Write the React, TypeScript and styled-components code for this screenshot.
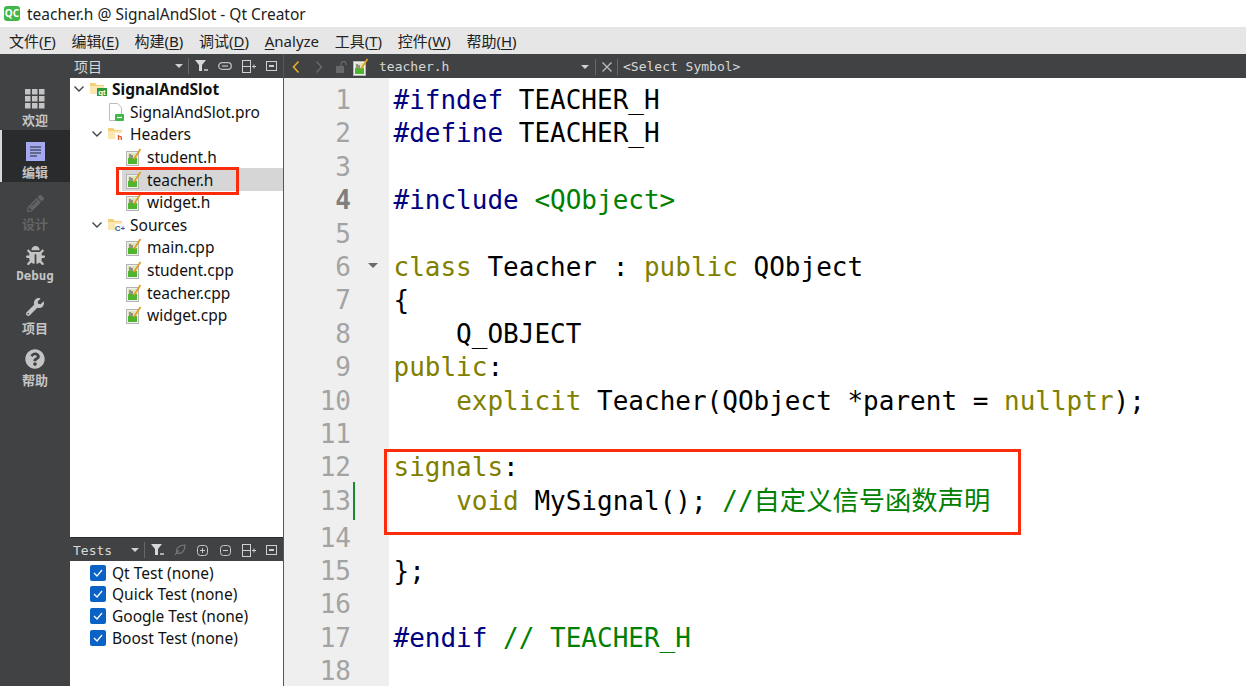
import React from 'react';
import styled, { createGlobalStyle } from 'styled-components';
import { FaBug, FaWrench, FaQuestionCircle, FaPencilAlt } from 'react-icons/fa';

const Global = createGlobalStyle`
  html, body { margin: 0; padding: 0; background: #fff; overflow: hidden; }
  * { box-sizing: border-box; }
`;

const UI = `"Noto Sans", "Noto Sans CJK SC", sans-serif`;
const MONO = `"DejaVu Sans Mono", "Noto Sans CJK SC", monospace`;

const Page = styled.div`
  position: relative;
  width: 1246px;
  height: 686px;
  overflow: hidden;
  display: flex;
  flex-direction: column;
  font-family: ${UI};
`;

const TitleBar = styled.div`
  height: 27px;
  display: flex;
  align-items: center;
  gap: 7px;
  padding: 0 0 0 4px;
  font-size: 15.5px;
  color: #222;
`;

const QtBadge = styled.div`
  width: 16px;
  height: 15px;
  border-radius: 3px;
  background: #41b649;
  color: #fff;
  font-size: 10px;
  font-weight: 700;
  line-height: 15px;
  text-align: center;
`;

const MenuBar = styled.div`
  height: 27px;
  display: flex;
  align-items: center;
  gap: 15.7px;
  padding-left: 9px;
  background: #e6e6e6;
  font-size: 15px;
  color: #222;
`;

const Underline = styled.span`
  text-decoration: underline;
  text-underline-offset: 2px;
`;

const Body = styled.div`
  flex: 1;
  display: flex;
  min-height: 0;
`;

const Sidebar = styled.div`
  width: 70px;
  flex: none;
  background: #404244;
  padding-top: 24px;
  display: flex;
  flex-direction: column;
`;

const ModeButton = styled.div<{ $active?: boolean; $disabled?: boolean }>`
  height: 52px;
  padding-top: 10px;
  display: flex;
  flex-direction: column;
  align-items: center;
  gap: 2px;
  background: ${({ $active }) => ($active ? '#2a2b2d' : 'transparent')};
  border-left: ${({ $active }) => ($active ? '2px solid #d8d8d8' : 'none')};
  padding-right: ${({ $active }) => ($active ? '2px' : '0')};
  color: ${({ $disabled }) => ($disabled ? '#626466' : '#c4c4c4')};
`;

const ModeLabel = styled.div<{ $mono?: boolean }>`
  font-family: ${({ $mono }) => ($mono ? MONO : UI)};
  font-size: ${({ $mono }) => ($mono ? '12.5px' : '13px')};
  font-weight: 700;
  line-height: 16px;
`;

const IconSlot = styled.div`
  height: 22px;
  display: flex;
  align-items: center;
  justify-content: center;
`;

const LeftColumn = styled.div`
  width: 214px;
  flex: none;
  display: flex;
  flex-direction: column;
  border-right: 1px solid #55575a;
`;

const PaneHeader = styled.div<{ $top?: boolean }>`
  height: 24px;
  flex: none;
  background: #404244;
  display: flex;
  align-items: center;
  padding: ${({ $top }) => ($top ? '1px 0 0 3px' : '0 0 0 4px')};
  color: #d8d8d8;
  border-top: ${({ $top }) => ($top ? '1px solid #2c2c2c' : 'none')};
`;

const PaneTitle = styled.div<{ $mono?: boolean }>`
  flex: 1;
  font-family: ${({ $mono }) => ($mono ? MONO : UI)};
  font-size: ${({ $mono }) => ($mono ? '13px' : '14px')};
`;

const ToolGroup = styled.div`
  display: flex;
  align-items: center;
  gap: 10px;
  padding-right: 6px;
`;

const Sep = styled.div`
  width: 1px;
  height: 16px;
  margin: 0 -4px 0 -5px;
  background: #66686a;
`;

const Arrow = styled.div`
  width: 0;
  height: 0;
  border-left: 4px solid transparent;
  border-right: 4px solid transparent;
  border-top: 4px solid #d0d0d0;
`;

const Tree = styled.div`
  height: 459px;
  flex: none;
  background: #fff;
`;

const TreeRow = styled.div<{ $level: number; $selected?: boolean }>`
  height: 22.6px;
  display: flex;
  align-items: center;
  gap: 5px;
  padding-left: ${({ $level }) => 3 + $level * 18}px;
  background: ${({ $selected }) =>
    $selected ? 'linear-gradient(to right, transparent 52px, #d6d6d6 52px)' : 'transparent'};
  font-size: 15.5px;
  color: #111;
`;

const Chevron = styled.svg`
  width: 12px;
  flex: none;
`;

const Spacer = styled.div`
  width: 12px;
  flex: none;
`;

const TreeName = styled.span<{ $bold?: boolean }>`
  font-weight: ${({ $bold }) => ($bold ? 700 : 400)};
`;

const TestList = styled.div`
  flex: 1;
  background: #fff;
  padding: 1px 0 0 20px;
`;

const TestRow = styled.label`
  height: 21.6px;
  display: flex;
  align-items: center;
  gap: 6px;
  font-size: 15.5px;
  color: #111;
`;

const CheckBox = styled.div`
  width: 16px;
  height: 16px;
  border-radius: 2px;
  background: #0a62c4;
  display: flex;
  align-items: center;
  justify-content: center;
`;

const EditorColumn = styled.div`
  flex: 1;
  min-width: 0;
  display: flex;
  flex-direction: column;
`;

const EditorBar = styled.div`
  height: 24px;
  flex: none;
  padding-top: 1px;
  background: #404244;
  display: flex;
  align-items: center;
  color: #d8d8d8;
  font-family: ${MONO};
  font-size: 13px;
`;

const NavSlot = styled.div`
  width: 23px;
  display: flex;
  justify-content: center;
`;

const FileName = styled.div`
  width: 212px;
  padding-left: 10px;
`;

const EditorSep = styled.div`
  width: 1px;
  height: 16px;
  background: #66686a;
`;

const ArrowSlot = styled.div`
  width: 14px;
  display: flex;
`;

const CloseSlot = styled.div`
  width: 21px;
  display: flex;
  justify-content: center;
`;

const SymbolLabel = styled.div`
  padding-left: 5px;
`;

const Code = styled.div`
  flex: 1;
  padding-top: 6px;
  background: linear-gradient(to right, #efefef 105px, #fff 105px);
  font-family: ${MONO};
  font-size: 26px;
`;

const Line = styled.div<{ $tall?: boolean }>`
  height: ${({ $tall }) => ($tall ? '37px' : '33.4px')};
  display: flex;
  align-items: flex-end;
`;

const LineNo = styled.div<{ $current?: boolean }>`
  width: 67px;
  height: 33.4px;
  line-height: 33.4px;
  text-align: right;
  flex: none;
  color: ${({ $current }) => ($current ? '#7f7f7f' : '#a3a3a3')};
  font-weight: ${({ $current }) => ($current ? 700 : 400)};
`;

const ChangeMark = styled.div<{ $on?: boolean }>`
  width: 2px;
  height: 38px;
  margin-left: 2px;
  align-self: center;
  flex: none;
  background: ${({ $on }) => ($on ? '#1c8a2c' : 'transparent')};
`;

const FoldCol = styled.div`
  width: 34px;
  height: 33.4px;
  flex: none;
  display: flex;
  align-items: center;
  padding-left: 13px;
`;

const FoldArrow = styled.div`
  width: 0;
  height: 0;
  margin-top: -5px;
  border-left: 5px solid transparent;
  border-right: 5px solid transparent;
  border-top: 5px solid #6a6a6a;
`;

const Text = styled.div`
  height: 33.4px;
  line-height: 33.4px;
  padding-left: 4.5px;
  white-space: pre;
  color: #000;
`;

const Tok = styled.span<{ $c: 'pre' | 'kw' | 'str' }>`
  color: ${({ $c }) => ({ pre: '#000080', kw: '#808000', str: '#008000' }[$c])};
`;

const Cjk = styled.span`
  font-size: 26.3px;
`;

const Highlight = styled.div<{ $x: number; $y: number; $w: number; $h: number }>`
  position: absolute;
  left: ${({ $x }) => $x}px;
  top: ${({ $y }) => $y}px;
  width: ${({ $w }) => $w}px;
  height: ${({ $h }) => $h}px;
  border: 3px solid #fb2c0c;
  pointer-events: none;
`;

const Down = () => (
  <Chevron viewBox="0 0 12 8" height="8">
    <path d="M1.5 1.5 L6 6 L10.5 1.5" fill="none" stroke="#444" strokeWidth="1.4" />
  </Chevron>
);

const FileIcon = () => (
  <svg width="16" height="18" viewBox="0 0 16 18" style={{ flex: 'none' }}>
    <rect x="0.5" y="3.5" width="12" height="14" fill="#f0f0f0" stroke="#b4b4b4" />
    <rect x="2" y="10" width="9" height="6" fill="#4fb52e" />
    <rect x="2" y="5" width="9" height="5" fill="#dfe4bf" />
    <path d="M4 6v4M6 7v3" stroke="#444" strokeWidth="1" />
    <path d="M8 11 L14.5 1" stroke="#e0a020" strokeWidth="1.8" />
  </svg>
);

const FolderIcon = ({ tag, color, solid }: { tag: string; color: string; solid?: boolean }) => (
  <svg width="17" height="14" viewBox="0 0 17 14" style={{ flex: 'none' }}>
    <path d="M0 1h5l2 2h7v9H0z" fill="#f4cf7a" />
    <rect x="0" y="4" width="14" height="8" fill="#fbe7b2" />
    <rect x="7" y="6" width="10" height="8" fill={solid ? color : '#fff'} />
    <text
      x="12"
      y="13"
      fontSize="8"
      fontWeight="700"
      textAnchor="middle"
      fill={solid ? '#fff' : color}
      fontFamily="Liberation Sans"
    >
      {tag}
    </text>
  </svg>
);

const ProIcon = () => (
  <svg width="17" height="18" viewBox="0 0 17 18" style={{ flex: 'none' }}>
    <path d="M1.5.5h8l4 4v13h-12z" fill="#fff" stroke="#bbb" />
    <rect x="7" y="11" width="9" height="7" rx="1" fill="#41b649" />
    <path d="M9 14.5h5" stroke="#fff" strokeWidth="1.2" />
  </svg>
);

const FilterIcon = () => (
  <svg width="13" height="12" viewBox="0 0 13 12">
    <path d="M0 0h11L7 5v6H4V5z" fill="#d8d8d8" />
    <path d="M9 10h4" stroke="#d8d8d8" strokeWidth="1.4" />
  </svg>
);

const LinkIcon = () => (
  <svg width="14" height="10" viewBox="0 0 14 10">
    <rect x="0.7" y="1.7" width="12.6" height="6.6" rx="3.3" fill="none" stroke="#bdbdbd" strokeWidth="1.3" />
    <path d="M4 5h6" stroke="#bdbdbd" strokeWidth="1.3" />
  </svg>
);

const SplitIcon = () => (
  <svg width="14" height="13" viewBox="0 0 14 13">
    <rect x="0.5" y="0.5" width="8" height="12" fill="none" stroke="#d0d0d0" />
    <path d="M1 6.5h8M10 6.5h4M12 4.5v4" stroke="#d0d0d0" />
  </svg>
);

const CloseIcon = () => (
  <svg width="11" height="10" viewBox="0 0 11 10">
    <rect x="0.5" y="0.5" width="10" height="9" fill="none" stroke="#d0d0d0" />
    <rect x="3" y="4" width="5" height="2" fill="#d0d0d0" />
  </svg>
);

const CirclePlus = ({ minus }: { minus?: boolean }) => (
  <svg width="11" height="11" viewBox="0 0 11 11" style={{ margin: '0 1px' }}>
    <rect x="0.5" y="0.5" width="10" height="10" rx="3" fill="none" stroke="#c8c8c8" />
    <path d={minus ? 'M3 5.5h5' : 'M3 5.5h5M5.5 3v5'} stroke="#c8c8c8" />
  </svg>
);

const LeafIcon = () => (
  <svg width="12" height="12" viewBox="0 0 12 12">
    <path d="M1 11 L5 6M3 9C1 4 6 1 11 1C11 6 8 11 3 9Z" fill="none" stroke="#77797b" strokeWidth="1.2" />
  </svg>
);

const Nav = ({ dir, color }: { dir: 'l' | 'r'; color: string }) => (
  <svg width="8" height="14" viewBox="0 0 8 14">
    <path d={dir === 'l' ? 'M6.5 1.5 L1.5 7 L6.5 12.5' : 'M1.5 1.5 L6.5 7 L1.5 12.5'} fill="none" stroke={color} strokeWidth="1.6" />
  </svg>
);

const Lock = () => (
  <svg width="12" height="12" viewBox="0 0 12 12">
    <rect x="0" y="5" width="8" height="7" fill="#66686a" />
    <path d="M5 5V3a2.5 2.5 0 0 1 5 0v1" fill="none" stroke="#66686a" strokeWidth="1.3" />
  </svg>
);

const GridIcon = () => (
  <svg width="20" height="20" viewBox="0 0 20 20" fill="#c4c4c4">
    {[0, 7, 14].map((y) =>
      [0, 7, 14].map((x) => <rect key={`${x}-${y}`} x={x} y={y} width="5.5" height="5.5" />),
    )}
  </svg>
);

const EditIcon = () => (
  <svg width="19" height="19" viewBox="0 0 19 19">
    <rect width="19" height="19" fill="#a3aaf0" />
    <path d="M4 5h11M4 8h11M4 11h11M4 14h7" stroke="#24262e" strokeWidth="1.1" />
  </svg>
);

const modes = [
  { label: '欢迎', icon: <GridIcon /> },
  { label: '编辑', icon: <EditIcon />, active: true },
  { label: '设计', icon: <FaPencilAlt size={17} />, disabled: true },
  { label: 'Debug', icon: <FaBug size={19} />, mono: true },
  { label: '项目', icon: <FaWrench size={18} /> },
  { label: '帮助', icon: <FaQuestionCircle size={20} /> },
];

const menus: [string, string, string][] = [
  ['文件(', 'F', ')'],
  ['编辑(', 'E', ')'],
  ['构建(', 'B', ')'],
  ['调试(', 'D', ')'],
  ['', 'A', 'nalyze'],
  ['工具(', 'T', ')'],
  ['控件(', 'W', ')'],
  ['帮助(', 'H', ')'],
];

const tests = ['Qt Test (none)', 'Quick Test (none)', 'Google Test (none)', 'Boost Test (none)'];

const K = ({ children }: { children: React.ReactNode }) => <Tok $c="kw">{children}</Tok>;
const P = ({ children }: { children: React.ReactNode }) => <Tok $c="pre">{children}</Tok>;
const S = ({ children }: { children: React.ReactNode }) => <Tok $c="str">{children}</Tok>;

const code: React.ReactNode[] = [
  <><P>#ifndef</P> TEACHER_H</>,
  <><P>#define</P> TEACHER_H</>,
  '',
  <><P>#include</P> <S>&lt;QObject&gt;</S></>,
  '',
  <><K>class</K> Teacher : <K>public</K> QObject</>,
  '{',
  '    Q_OBJECT',
  <><K>public</K>:</>,
  <>    <K>explicit</K> Teacher(QObject *parent = <K>nullptr</K>);</>,
  '',
  <><K>signals</K>:</>,
  <>    <K>void</K> MySignal(); <S>//<Cjk>自定义信号函数声明</Cjk></S></>,
  '',
  '};',
  '',
  <><P>#endif</P> <S>// TEACHER_H</S></>,
  '',
];

export default function App() {
  return (
    <Page>
      <Global />
      <TitleBar>
        <QtBadge>QC</QtBadge>
        teacher.h @ SignalAndSlot - Qt Creator
      </TitleBar>
      <MenuBar>
        {menus.map(([a, u, b]) => (
          <span key={u}>
            {a}
            <Underline>{u}</Underline>
            {b}
          </span>
        ))}
      </MenuBar>
      <Body>
        <Sidebar>
          {modes.map((m) => (
            <ModeButton key={m.label} $active={m.active} $disabled={m.disabled}>
              <IconSlot>{m.icon}</IconSlot>
              <ModeLabel $mono={m.mono}>{m.label}</ModeLabel>
            </ModeButton>
          ))}
        </Sidebar>
        <LeftColumn>
          <PaneHeader>
            <PaneTitle>项目</PaneTitle>
            <ToolGroup>
              <Arrow />
              <Sep />
              <FilterIcon />
              <LinkIcon />
              <SplitIcon />
              <CloseIcon />
            </ToolGroup>
          </PaneHeader>
          <Tree>
            <TreeRow $level={0}>
              <Down />
              <FolderIcon tag="qt" color="#2a9a3a" solid />
              <TreeName $bold>SignalAndSlot</TreeName>
            </TreeRow>
            <TreeRow $level={1}>
              <Spacer />
              <ProIcon />
              <TreeName>SignalAndSlot.pro</TreeName>
            </TreeRow>
            <TreeRow $level={1}>
              <Down />
              <FolderIcon tag="h" color="#d03020" />
              <TreeName>Headers</TreeName>
            </TreeRow>
            {['student.h', 'teacher.h', 'widget.h'].map((f) => (
              <TreeRow key={f} $level={2} $selected={f === 'teacher.h'}>
                <Spacer />
                <FileIcon />
                <TreeName>{f}</TreeName>
              </TreeRow>
            ))}
            <TreeRow $level={1}>
              <Down />
              <FolderIcon tag="C+" color="#3060a0" />
              <TreeName>Sources</TreeName>
            </TreeRow>
            {['main.cpp', 'student.cpp', 'teacher.cpp', 'widget.cpp'].map((f) => (
              <TreeRow key={f} $level={2}>
                <Spacer />
                <FileIcon />
                <TreeName>{f}</TreeName>
              </TreeRow>
            ))}
          </Tree>
          <PaneHeader $top>
            <PaneTitle $mono>Tests</PaneTitle>
            <ToolGroup>
              <Arrow />
              <Sep />
              <FilterIcon />
              <LeafIcon />
              <CirclePlus />
              <CirclePlus minus />
              <SplitIcon />
              <CloseIcon />
            </ToolGroup>
          </PaneHeader>
          <TestList>
            {tests.map((t) => (
              <TestRow key={t}>
                <CheckBox>
                  <svg width="10" height="8" viewBox="0 0 10 8">
                    <path d="M1 4 L4 7 L9 1" fill="none" stroke="#fff" strokeWidth="1.3" />
                  </svg>
                </CheckBox>
                {t}
              </TestRow>
            ))}
          </TestList>
        </LeftColumn>
        <EditorColumn>
          <EditorBar>
            <NavSlot>
              <Nav dir="l" color="#e8b020" />
            </NavSlot>
            <NavSlot>
              <Nav dir="r" color="#66686a" />
            </NavSlot>
            <NavSlot>
              <Lock />
            </NavSlot>
            <FileIcon />
            <FileName>teacher.h</FileName>
            <ArrowSlot>
              <Arrow />
            </ArrowSlot>
            <EditorSep />
            <CloseSlot>
              <svg width="10" height="10" viewBox="0 0 10 10">
                <path d="M0.5 0.5 L9.5 9.5M9.5 0.5 L0.5 9.5" stroke="#bdbdbd" strokeWidth="1.3" />
              </svg>
            </CloseSlot>
            <EditorSep />
            <SymbolLabel>&lt;Select Symbol&gt;</SymbolLabel>
          </EditorBar>
          <Code>
            {code.map((c, i) => (
              <Line key={i} $tall={i === 13}>
                <LineNo $current={i === 3}>{i + 1}</LineNo>
                <ChangeMark $on={i === 12} />
                <FoldCol>{i === 5 && <FoldArrow />}</FoldCol>
                <Text>{c}</Text>
              </Line>
            ))}
          </Code>
        </EditorColumn>
      </Body>
      <Highlight $x={116} $y={167} $w={123} $h={28} />
      <Highlight $x={384} $y={449} $w={637} $h={86} />
    </Page>
  );
}
